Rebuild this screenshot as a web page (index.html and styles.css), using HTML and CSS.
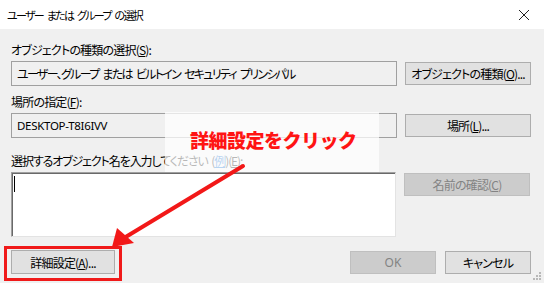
FILE: index.html
```html
<!DOCTYPE html>
<html lang="ja">
<head>
<meta charset="utf-8">
<link rel="stylesheet" href="styles.css">
</head>
<body>
<div class="window">
  <div class="titlebar">
    <span class="title">ユーザー または グループ の選択</span>
    <svg class="close" width="12" height="12" viewBox="0 0 12 12"><path d="M1 1 L11 11 M11 1 L1 11" stroke="#222" stroke-width="1"/></svg>
  </div>
  <div class="content">
    <div class="label l1">オブジェクトの種類の選択(<u>S</u>):</div>
    <div class="row">
      <div class="field kana">ユーザー、グループ または ビルトイン セキュリティ プリンシパル</div>
      <button class="btn">オブジェクトの種類(<u>O</u>)...</button>
    </div>
    <div class="label l2">場所の指定(<u>F</u>):</div>
    <div class="row">
      <div class="field latin">DESKTOP-T8I6IVV</div>
      <button class="btn">場所(<u>L</u>)...</button>
    </div>
    <div class="label l3">選択するオブジェクト名を入力してください (<span class="link">例</span>)(<u>E</u>):</div>
    <div class="row top">
      <div class="area"><span class="caret"></span></div>
      <button class="btn disabled">名前の確認(<u>C</u>)</button>
    </div>
    <div class="bottom">
      <div class="hl"><button class="btn adv">詳細設定(<u>A</u>)...</button></div>
      <div class="right">
        <button class="btn disabled ok">OK</button>
        <button class="btn cancel">キャンセル</button>
      </div>
    </div>
  </div>
  <div class="callout">詳細設定をクリック</div>
  <svg class="arrow" width="544" height="283" viewBox="0 0 544 283">
    <line x1="243" y1="166" x2="124" y2="238" stroke="#f21818" stroke-width="4" stroke-linecap="round"/>
    <polygon points="112,247 117,228 134,243" fill="#f21818"/>
  </svg>
  <svg class="grip" width="8" height="8" viewBox="0 0 8 8">
    <rect x="6" y="0" width="2" height="2" fill="#b8b8b8"/>
    <rect x="3" y="3" width="2" height="2" fill="#b8b8b8"/>
    <rect x="6" y="3" width="2" height="2" fill="#b8b8b8"/>
    <rect x="0" y="6" width="2" height="2" fill="#b8b8b8"/>
    <rect x="3" y="6" width="2" height="2" fill="#b8b8b8"/>
    <rect x="6" y="6" width="2" height="2" fill="#b8b8b8"/>
  </svg>
</div>
</body>
</html>
```

FILE: styles.css
```css
* { box-sizing: border-box; }
html, body { margin: 0; padding: 0; }
body {
  width: 544px;
  height: 283px;
  overflow: hidden;
  background: #f0f0f0;
  font-family: "Noto Sans CJK JP", "Noto Sans", sans-serif;
  font-size: 12px;
  font-feature-settings: "palt";
  letter-spacing: -0.8px;
  color: #000;
}
.window { position: relative; width: 544px; height: 283px; }
.titlebar {
  height: 29px;
  background: #fff;
  display: flex;
  align-items: center;
  justify-content: space-between;
  padding: 0 14px 0 7px;
}
.title { font-size: 11px; letter-spacing: -1.7px; word-spacing: 3px; }
.content { padding: 0 13px 0 11px; }
.label { height: 16px; line-height: 16px; white-space: nowrap; }
.l1 { margin-top: 13px; margin-bottom: 3px; }
.l2 { margin-top: 8px; margin-bottom: 3px; }
.l3 { margin-top: 15px; margin-bottom: 3px; letter-spacing: -1.1px; word-spacing: 2px; }
.row { display: flex; align-items: center; gap: 8px; }
.row.top { align-items: flex-start; }
.field {
  width: 386px;
  height: 25px;
  border: 1px solid #a0a0a0;
  background: #f0f0f0;
  line-height: 23px;
  padding-left: 5px;
  white-space: nowrap;
}
.field.kana { letter-spacing: -1.7px; word-spacing: 3px; }
.field.latin { letter-spacing: -0.3px; font-family: "Noto Sans", sans-serif; font-size: 11.5px; }
.btn {
  font: inherit;
  font-size: 12px;
  font-feature-settings: "palt";
  letter-spacing: -0.8px;
  white-space: nowrap;
  width: 126px;
  height: 23px;
  background: #e1e1e1;
  border: 1px solid #adadad;
  color: #000;
  padding: 0;
  line-height: 21px;
}
.btn.disabled { background: #cccccc; border-color: #bfbfbf; color: #838383; }
.area {
  width: 385px;
  height: 65px;
  background: #fff;
  border: 1px solid;
  border-color: #a0a0a0 #e3e3e3 #e3e3e3 #a0a0a0;
  box-shadow: inset 1px 1px 0 #696969;
  position: relative;
}
.row.top .btn { margin-top: 1px; }
.caret {
  position: absolute;
  left: 2px;
  top: 3px;
  width: 1px;
  height: 16px;
  background: #000;
}
.link { color: #0066cc; text-decoration: underline; }
.bottom {
  margin-top: 9px;
  display: flex;
  justify-content: space-between;
  align-items: center;
}
.hl {
  margin-left: -7px;
  border: 3px solid #f01a1a;
  padding: 1px 4px 4px 4px;
}
.btn.adv { width: 104px; height: 24px; }
.right { display: flex; gap: 9px; margin-top: -3px; }
.btn.ok { width: 86px; letter-spacing: 0; font-family: "Noto Sans", sans-serif; }
.btn.cancel { width: 86px; }
.callout {
  position: absolute;
  left: 165px;
  top: 112px;
  width: 214px;
  height: 60px;
  background: rgba(255, 255, 255, 0.72);
  color: #ff1414;
  font-weight: 900;
  font-size: 19px;
  line-height: 56px;
  padding-left: 25px;
  letter-spacing: -0.5px;
  font-feature-settings: normal;
}
.arrow { position: absolute; left: 0; top: 0; pointer-events: none; }
.grip { position: absolute; right: 3px; bottom: 3px; }
```
